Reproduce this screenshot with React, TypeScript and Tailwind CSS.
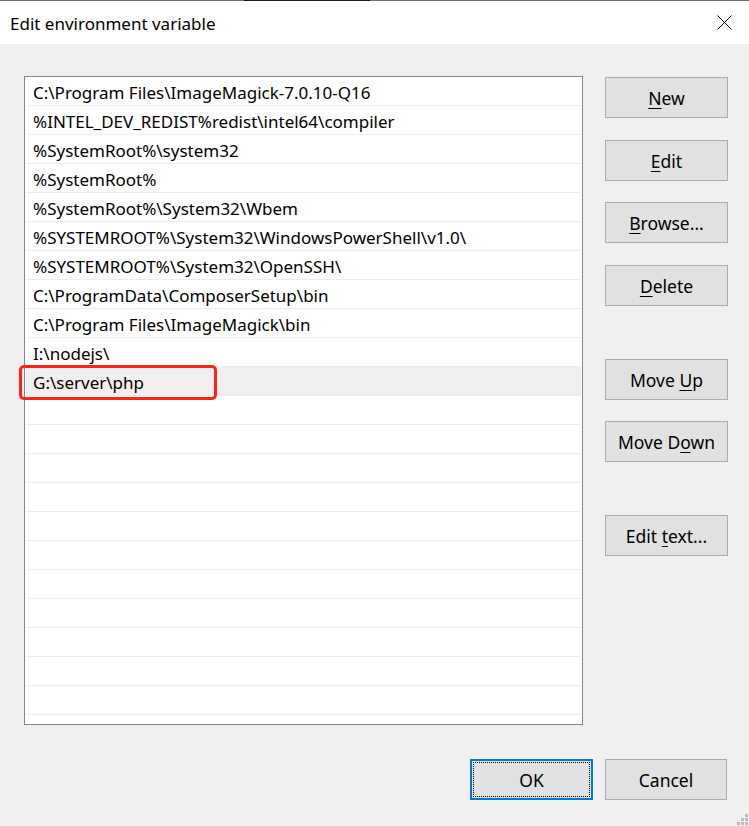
import type { ReactNode } from "react";

const paths = [
  "C:\\Program Files\\ImageMagick-7.0.10-Q16",
  "%INTEL_DEV_REDIST%redist\\intel64\\compiler",
  "%SystemRoot%\\system32",
  "%SystemRoot%",
  "%SystemRoot%\\System32\\Wbem",
  "%SYSTEMROOT%\\System32\\WindowsPowerShell\\v1.0\\",
  "%SYSTEMROOT%\\System32\\OpenSSH\\",
  "C:\\ProgramData\\ComposerSetup\\bin",
  "C:\\Program Files\\ImageMagick\\bin",
  "I:\\nodejs\\",
  "G:\\server\\php",
];

const ROW_COUNT = 22;
const SELECTED = 10;

function Btn({ children, className = "" }: { children: ReactNode; className?: string }) {
  return (
    <button className={`h-[41px] w-[123px] border border-[#adadad] bg-[#e1e1e1] pt-px text-[17.5px] text-black ${className}`}>
      {children}
    </button>
  );
}

function Key({ children }: { children: ReactNode }) {
  return <span className="underline decoration-1 underline-offset-[3px]">{children}</span>;
}

function Grip() {
  const dots = [
    [8, 0],
    [4, 4],
    [8, 4],
    [0, 8],
    [4, 8],
    [8, 8],
  ];
  return (
    <svg className="absolute bottom-[1px] right-[1px]" width="11" height="11" viewBox="0 0 11 11">
      {dots.map(([x, y]) => (
        <rect key={`${x}-${y}`} x={x} y={y} width="3" height="3" fill="#bcbcbc" />
      ))}
    </svg>
  );
}

export default function App() {
  const rows = Array.from({ length: ROW_COUNT }, (_, i) => paths[i] ?? "");

  return (
    <div
      className="relative flex h-[826px] w-[749px] flex-col overflow-hidden bg-[#f0f0f0] text-black"
      style={{ fontFamily: '"Noto Sans", "Open Sans", sans-serif' }}
    >
      {/* window frame top edge */}
      <div className="flex h-px">
        <div className="w-[244px] bg-[#707070]" />
        <div className="w-[126px] bg-[#1a1a1a]" />
        <div className="flex-1 bg-[#707070]" />
      </div>

      {/* title bar */}
      <div className="flex h-[43px] items-center justify-between bg-white pl-[10px] pr-[17px]">
        <span className="pt-[2px] text-[17px]">Edit environment variable</span>
        <svg width="15" height="15" viewBox="0 0 15 15" className="mt-[-1px]">
          <path d="M0.5 0.5 L14.5 14.5 M14.5 0.5 L0.5 14.5" stroke="#000" strokeWidth="1" />
        </svg>
      </div>

      <div className="flex flex-1 flex-col pl-[24px] pt-[32px]">
        <div className="flex gap-[22px]">
          {/* path list */}
          <div className="h-[649px] w-[559px] border border-[#828790] bg-white">
            <div className="px-px">
              {rows.map((p, i) => (
                <div key={i} className="relative h-[29px] border-b border-[#ececec]">
                  <div
                    className={`flex h-full items-center pl-[7px] pt-[3px] text-[17px] ${i === SELECTED ? "bg-[#efefef]" : ""}`}
                  >
                    {p}
                  </div>
                  {i === SELECTED && (
                    <div className="absolute left-[-7px] top-[-2px] h-[35px] w-[198px] rounded-[5px] border-[3px] border-[#ff2215]" />
                  )}
                </div>
              ))}
            </div>
          </div>

          {/* side buttons */}
          <div className="flex flex-col pt-px">
            <Btn>
              <Key>N</Key>ew
            </Btn>
            <Btn className="mt-[22px]">
              <Key>E</Key>dit
            </Btn>
            <Btn className="mt-[21px]">
              <Key>B</Key>rowse...
            </Btn>
            <Btn className="mt-[22px]">
              <Key>D</Key>elete
            </Btn>
            <Btn className="mt-[53px]">
              Move <Key>U</Key>p
            </Btn>
            <Btn className="mt-[21px]">
              Move D<Key>o</Key>wn
            </Btn>
            <Btn className="mt-[53px]">
              Edit <Key>t</Key>ext...
            </Btn>
          </div>
        </div>

        {/* dialog buttons */}
        <div className="mt-[34px] flex justify-end gap-[12px] pr-[22px]">
          <button className="relative h-[41px] w-[123px] border-2 border-[#0078d7] bg-[#e1e1e1] pt-px text-[17.5px]">
            <span className="absolute inset-px border border-dotted border-black" />
            OK
          </button>
          <button className="h-[41px] w-[122px] border border-[#adadad] bg-[#e1e1e1] pt-px text-[17.5px]">Cancel</button>
        </div>
      </div>

      <Grip />
    </div>
  );
}
